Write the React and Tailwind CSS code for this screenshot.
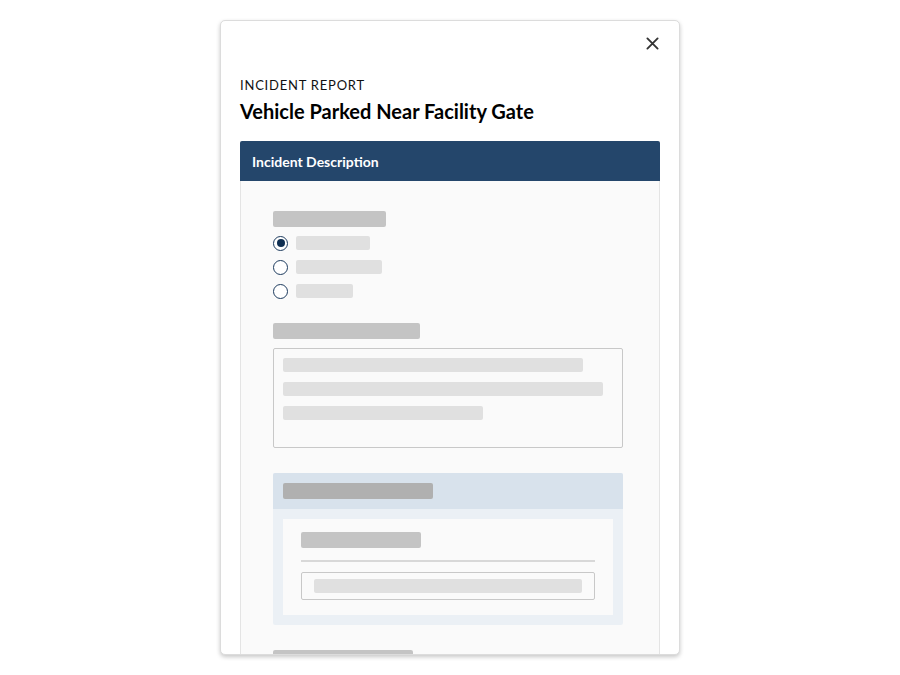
import React, { useState } from 'react';

const Skel = ({ className }) => <div className={`rounded-[2px] ${className}`} />;

const Radio = ({ checked }) => (
  <div className="flex h-[15px] w-[15px] items-center justify-center rounded-full border-[1.5px] border-[#1d3b5e] bg-white">
    {checked && <div className="h-[8px] w-[8px] rounded-full bg-[#0f2f52]" />}
  </div>
);

const App = () => {
  const [selected] = useState(0);
  const options = ['w-[74px]', 'w-[86px]', 'w-[57px]'];

  return (
    <div className="flex min-h-[675px] w-[900px] justify-center bg-white pt-5 font-['Lato',sans-serif]">
      {/* Modal card */}
      <div className="h-[635px] w-[460px] overflow-hidden rounded-[5px] border border-[#dcdcdc] bg-white shadow-[0_2px_4px_rgba(0,0,0,0.22)]">
        {/* Close */}
        <div className="flex justify-end pr-5 pt-[15px]">
          <button className="flex h-[14px] w-[14px] items-center justify-center text-[#333]">
            <svg viewBox="0 0 14 14" className="h-[13px] w-[13px]" fill="none" stroke="currentColor" strokeWidth="2" strokeLinecap="round">
              <path d="M1.5 1.5l11 11M12.5 1.5l-11 11" />
            </svg>
          </button>
        </div>

        {/* Header */}
        <div className="px-[19px] pt-[27px]">
          <p className="text-[13px] leading-4 tracking-[0.06em] text-[#111]">INCIDENT REPORT</p>
          <h1 className="mt-[6px] text-[20px] font-bold leading-6 text-black">Vehicle Parked Near Facility Gate</h1>
        </div>

        {/* Section */}
        <div className="mx-[19px] mt-[18px]">
          <div className="flex h-[40px] items-center rounded-t-[2px] bg-[#24466b] px-3">
            <span className="text-[14px] font-bold text-white">Incident Description</span>
          </div>

          <div className="border-x border-[#e4e4e4] bg-[#fafafa] pl-8 pt-[30px] pb-10">
            <div className="w-[350px]">
              {/* Radio group */}
              <Skel className="h-4 w-[113px] bg-[#c4c4c4]" />
              <div className="mt-1 flex flex-col">
                {options.map((w, i) => (
                  <div key={i} className="flex h-6 items-center gap-2">
                    <Radio checked={i === selected} />
                    <Skel className={`h-[14px] ${w} bg-[#e0e0e0]`} />
                  </div>
                ))}
              </div>

              {/* Textarea */}
              <Skel className="mt-5 h-4 w-[147px] bg-[#c4c4c4]" />
              <div className="mt-[9px] flex h-[100px] flex-col gap-[10px] rounded-[2px] border border-[#c8c8c8] p-[9px]">
                <Skel className="h-[14px] w-[300px] bg-[#e0e0e0]" />
                <Skel className="h-[14px] w-[320px] bg-[#e0e0e0]" />
                <Skel className="h-[14px] w-[200px] bg-[#e0e0e0]" />
              </div>

              {/* Nested panel */}
              <div className="mt-[25px] overflow-hidden rounded-[2px] bg-[#ebf0f5]">
                <div className="flex h-9 items-center bg-[#d8e2ec] px-[10px]">
                  <Skel className="h-4 w-[150px] bg-[#b0b0b0]" />
                </div>
                <div className="p-[10px]">
                  <div className="bg-[#fafafa] px-[18px] pt-[13px] pb-[15px]">
                    <Skel className="h-4 w-[120px] bg-[#c4c4c4]" />
                    <div className="mt-3 h-[1.5px] w-[294px] bg-[#d8d8d8]" />
                    <div className="mt-[10px] flex h-[28px] w-[294px] items-center rounded-[2px] border border-[#c8c8c8] px-3">
                      <Skel className="h-[14px] w-[268px] bg-[#e0e0e0]" />
                    </div>
                  </div>
                </div>
              </div>

              <Skel className="mt-[25px] h-4 w-[140px] bg-[#c4c4c4]" />
            </div>
          </div>
        </div>
      </div>
    </div>
  );
};

export default App;
